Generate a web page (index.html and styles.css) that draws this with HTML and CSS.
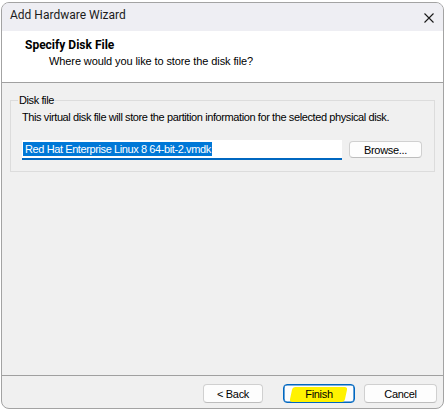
FILE: index.html
```html
<!DOCTYPE html>
<html>
<head>
<meta charset="utf-8">
<link rel="stylesheet" href="styles.css">
</head>
<body>
<div class="window">
  <div class="titlebar">
    <span class="title">Add Hardware Wizard</span>
    <svg class="close" width="10" height="10" viewBox="0 0 10 10"><path d="M0.5 0.5 L9.5 9.5 M9.5 0.5 L0.5 9.5" stroke="#1a1a1a" stroke-width="1.1" fill="none"/></svg>
  </div>
  <div class="header">
    <div class="heading">Specify Disk File</div>
    <div class="subheading">Where would you like to store the disk file?</div>
  </div>
  <div class="body">
    <fieldset class="group">
      <legend class="group-label">Disk file</legend>
      <div class="desc">This virtual disk file will store the partition information for the selected physical disk.</div>
      <div class="filerow">
        <div class="input"><span class="selected">Red Hat Enterprise Linux 8 64-bit-2.vmdk</span></div>
        <button class="btn browse">Browse...</button>
      </div>
    </fieldset>
  </div>
  <div class="footer">
    <button class="btn back">&lt; Back</button>
    <button class="btn finish"><span class="mark"></span><span class="label">Finish</span></button>
    <button class="btn cancel">Cancel</button>
  </div>
</div>
</body>
</html>
```

FILE: styles.css
```css
html, body {
  margin: 0;
  padding: 0;
}
body {
  width: 445px;
  height: 409px;
  overflow: hidden;
  background: #ffffff;
  font-family: "Liberation Sans", Arial, sans-serif;
  font-size: 11px;
  letter-spacing: -0.4px;
  color: #000;
  padding: 2px 0 0 1px;
  box-sizing: border-box;
}
.window {
  width: 443px;
  height: 407px;
  box-sizing: border-box;
  border: 1px solid #a3a3a3;
  border-radius: 8px;
  background: #f0f0f0;
  overflow: hidden;
  display: flex;
  flex-direction: column;
}
.titlebar {
  height: 28px;
  flex: none;
  background: #eeeef3;
  display: flex;
  align-items: flex-start;
  justify-content: space-between;
  padding: 4px 9px 0 8px;
  box-sizing: border-box;
}
.title {
  font-family: Roboto, "Noto Sans", sans-serif;
  font-size: 12px;
  letter-spacing: 0;
  line-height: 16px;
  color: #1b1b1b;
}
.close {
  display: block;
  margin-top: 6px;
}
.header {
  height: 52px;
  flex: none;
  background: #ffffff;
  border-bottom: 1px solid #a0a0a0;
  box-sizing: border-box;
  padding: 6px 0 0 23px;
}
.heading {
  font-family: Roboto, "Noto Sans", sans-serif;
  font-weight: bold;
  font-size: 12px;
  letter-spacing: 0;
  line-height: 16px;
}
.subheading {
  font-size: 11px;
  letter-spacing: -0.1px;
  line-height: 16px;
  padding-left: 24px;
}
.body {
  flex: 1;
  padding: 0 8px;
}
.group {
  margin: 11px 0 0 0;
  padding: 4px 11px 11px 11px;
  border: 1px solid #dcdcdc;
  min-width: 0;
}
.group-label {
  margin-left: -4px;
  padding: 0 1px;
  line-height: 13px;
}
.desc {
  line-height: 13px;
}
.filerow {
  display: flex;
  align-items: flex-start;
  margin-top: 16px;
}
.input {
  width: 320px;
  height: 20px;
  box-sizing: border-box;
  background: #ffffff;
  border-bottom: 2px solid #0067c0;
  padding: 2px 0 0 1px;
}
.selected {
  background: #0078d7;
  color: #ffffff;
  display: inline-block;
  line-height: 14px;
  padding: 0 1px 0 2px;
}
.btn {
  font-family: inherit;
  font-size: 11px;
  letter-spacing: -0.3px;
  color: #000;
  background: #fdfdfd;
  border: 1px solid #d0d0d0;
  border-bottom-color: #bdbdbd;
  border-radius: 4px;
  box-sizing: border-box;
  padding: 0;
  line-height: 16px;
}
.browse {
  width: 73px;
  height: 17px;
  margin: 1px 0 0 7px;
  line-height: 14px;
}
.footer {
  height: 33px;
  flex: none;
  box-sizing: border-box;
  border-top: 1px solid #a0a0a0;
  display: flex;
  align-items: flex-start;
  justify-content: flex-end;
  padding: 8px 6px 0 0;
}
.footer .btn {
  height: 19px;
}
.back {
  width: 60px;
}
.finish {
  width: 72px;
  margin-left: 20px;
  border: 1px solid #0067c0;
  box-shadow: inset 0 0 0 0.6px #0067c0;
  position: relative;
}
.cancel {
  width: 73px;
  margin-left: 9px;
}
.finish .label {
  position: relative;
}
.finish .mark {
  position: absolute;
  left: 7px;
  top: 2px;
  width: 55px;
  height: 15px;
  background: #fff200;
  transform: skewX(-12deg);
  border-radius: 3px;
}
```
